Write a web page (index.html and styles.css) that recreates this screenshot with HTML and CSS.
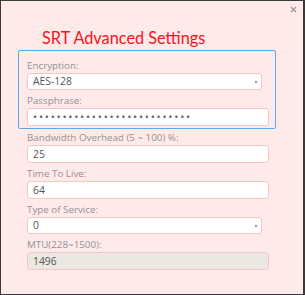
FILE: index.html
```html
<!DOCTYPE html>
<html>
<head>
<meta charset="utf-8">
<link rel="stylesheet" href="styles.css">
</head>
<body>
<div class="dialog">
  <div class="close"><svg width="7" height="7" viewBox="0 0 7 7"><path d="M1 1L6 6M6 1L1 6" stroke="#9a9a9a" stroke-width="1.4"/></svg></div>
  <h1 class="title">SRT Advanced Settings</h1>
  <div class="group">
    <div class="field first">
      <div class="label">Encryption:</div>
      <div class="select">AES-128</div>
    </div>
    <div class="field">
      <div class="label">Passphrase:</div>
      <div class="input dots">•••••••••••••••••••••••••••</div>
    </div>
  </div>
  <div class="fields">
    <div class="field tight">
      <div class="label">Bandwidth Overhead (5 ~ 100) %:</div>
      <div class="input">25</div>
    </div>
    <div class="field">
      <div class="label">Time To Live:</div>
      <div class="input">64</div>
    </div>
    <div class="field">
      <div class="label">Type of Service:</div>
      <div class="select">0</div>
    </div>
    <div class="field">
      <div class="label">MTU(228~1500):</div>
      <div class="input disabled">1496</div>
    </div>
  </div>
</div>
</body>
</html>
```

FILE: styles.css
```css
html, body {
  margin: 0;
  padding: 0;
}
body {
  font-family: "Open Sans", "Noto Sans", sans-serif;
}
.dialog {
  position: relative;
  width: 305px;
  height: 295px;
  box-sizing: border-box;
  background: #ffeaea;
  border-top: 1px solid #3a3a3a;
  border-left: 1px solid #3a3a3a;
  border-right: 2px solid #3a3a3a;
  border-bottom: 1px solid #3a3a3a;
}
.close {
  position: absolute;
  top: 5px;
  right: 6px;
  width: 7px;
  height: 7px;
  line-height: 0;
}
.title {
  margin: 0;
  padding: 27px 0 0 41px;
  height: 22px;
  font-family: Lato, sans-serif;
  font-weight: normal;
  font-size: 16.3px;
  line-height: 20px;
  color: #f5141c;
}
.group {
  margin-left: 17px;
  width: 258px;
  box-sizing: border-box;
  border: 1px solid #5aa9ee;
  border-radius: 2px;
  padding: 4px 0 2px 8px;
}
.fields {
  padding-left: 26px;
}
.field {
  display: flex;
  flex-direction: column;
}
.label {
  margin-top: 4px;
  height: 14px;
  line-height: 14px;
  font-size: 9.8px;
  color: #929292;
}
.field.tight .label {
  margin-top: 2px;
}
.input, .select {
  position: relative;
  box-sizing: border-box;
  height: 18px;
  line-height: 16px;
  width: 242px;
  background: #fff;
  border: 1px solid #f7c4c4;
  border-radius: 3px;
  padding-left: 5px;
  font-size: 10.3px;
  color: #555;
}
.select {
  width: 235px;
  height: 17px;
  line-height: 15px;
}
.select::after {
  content: "";
  position: absolute;
  right: 4px;
  top: 7px;
  border-left: 1.5px solid transparent;
  border-right: 1.5px solid transparent;
  border-top: 3px solid #666;
}
.dots {
  font-size: 11px;
  letter-spacing: 1.75px;
  color: #666;
}
.disabled {
  background: #eae8e1;
}
```
